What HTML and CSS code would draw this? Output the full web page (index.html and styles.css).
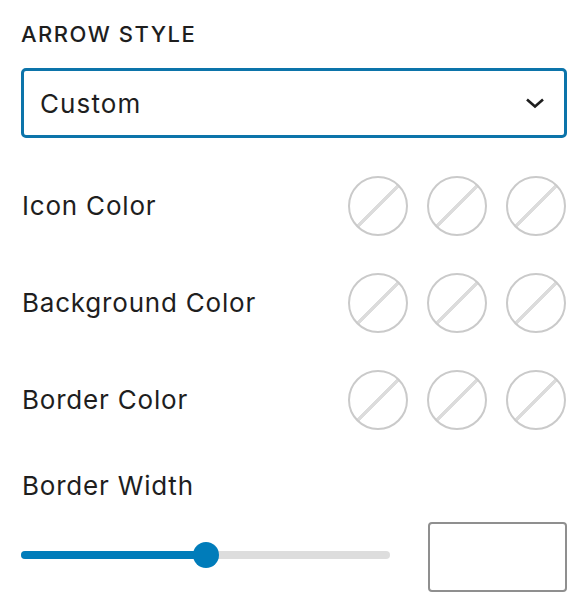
FILE: index.html
```html
<!DOCTYPE html>
<html>
<head>
<meta charset="utf-8">
<link rel="stylesheet" href="styles.css">
</head>
<body>
<div class="panel">
  <div class="heading">ARROW STYLE</div>
  <div class="select">
    <span class="select-value">Custom</span>
    <svg class="chevron" width="20" height="12" viewBox="0 0 20 12"><polyline points="2,2.5 10,9.5 18,2.5" fill="none" stroke="#1e1e1e" stroke-width="2.6"/></svg>
  </div>
  <div class="rows">
    <div class="row">
      <span class="label">Icon Color</span>
      <div class="swatches"><span class="swatch"></span><span class="swatch"></span><span class="swatch"></span></div>
    </div>
    <div class="row">
      <span class="label">Background Color</span>
      <div class="swatches"><span class="swatch"></span><span class="swatch"></span><span class="swatch"></span></div>
    </div>
    <div class="row">
      <span class="label">Border Color</span>
      <div class="swatches"><span class="swatch"></span><span class="swatch"></span><span class="swatch"></span></div>
    </div>
  </div>
  <div class="width-label"><span class="label">Border Width</span></div>
  <div class="range-row">
    <div class="track">
      <div class="fill" style="width: 185px"></div>
      <div class="thumb" style="left: 172px"></div>
    </div>
    <div class="number"></div>
  </div>
</div>
</body>
</html>
```
FILE: styles.css
```css
html, body {
  margin: 0;
  padding: 0;
  background: #fff;
}
body {
  font-family: Inter, "Noto Sans", "Liberation Sans", sans-serif;
  color: #1e1e1e;
}
.panel {
  width: 588px;
  box-sizing: border-box;
  padding: 0 21px;
}
.heading {
  height: 68px;
  display: flex;
  align-items: center;
  font-size: 22px;
  font-weight: 500;
  letter-spacing: 1.5px;
}
.select {
  height: 70px;
  box-sizing: border-box;
  border: 3px solid #0c74aa;
  border-radius: 5px;
  display: flex;
  align-items: center;
  justify-content: space-between;
  padding: 0 19px 0 16px;
}
.select-value {
  font-size: 26px;
  letter-spacing: 1.1px;
}
.chevron {
  display: block;
}
.rows {
  margin-top: 19px;
}
.row {
  height: 97px;
  display: flex;
  align-items: center;
  justify-content: space-between;
}
.label {
  font-size: 26px;
  letter-spacing: 0.8px;
  padding-left: 1px;
}
.swatches {
  display: flex;
  gap: 19px;
  margin-right: 1px;
}
.swatch {
  width: 60px;
  height: 60px;
  box-sizing: border-box;
  border-radius: 50%;
  border: 2px solid #cacaca;
  background: linear-gradient(-45deg, transparent calc(50% - 1.5px), #dcdcdc calc(50% - 1.5px), #dcdcdc calc(50% + 1.5px), transparent calc(50% + 1.5px));
}
.width-label {
  height: 74px;
  display: flex;
  align-items: center;
}
.range-row {
  height: 70px;
  display: flex;
  align-items: center;
  justify-content: space-between;
}
.track {
  position: relative;
  width: 369px;
  height: 8px;
  border-radius: 4px;
  background: #dddddd;
  margin-bottom: 4px;
}
.fill {
  position: absolute;
  left: 0;
  top: 0;
  height: 8px;
  border-radius: 4px;
  background: #007cba;
}
.thumb {
  position: absolute;
  top: -9px;
  width: 26px;
  height: 26px;
  border-radius: 50%;
  background: #007cba;
}
.number {
  width: 139px;
  height: 70px;
  box-sizing: border-box;
  border: 2px solid #8f8f8f;
  border-radius: 4px;
}
```
